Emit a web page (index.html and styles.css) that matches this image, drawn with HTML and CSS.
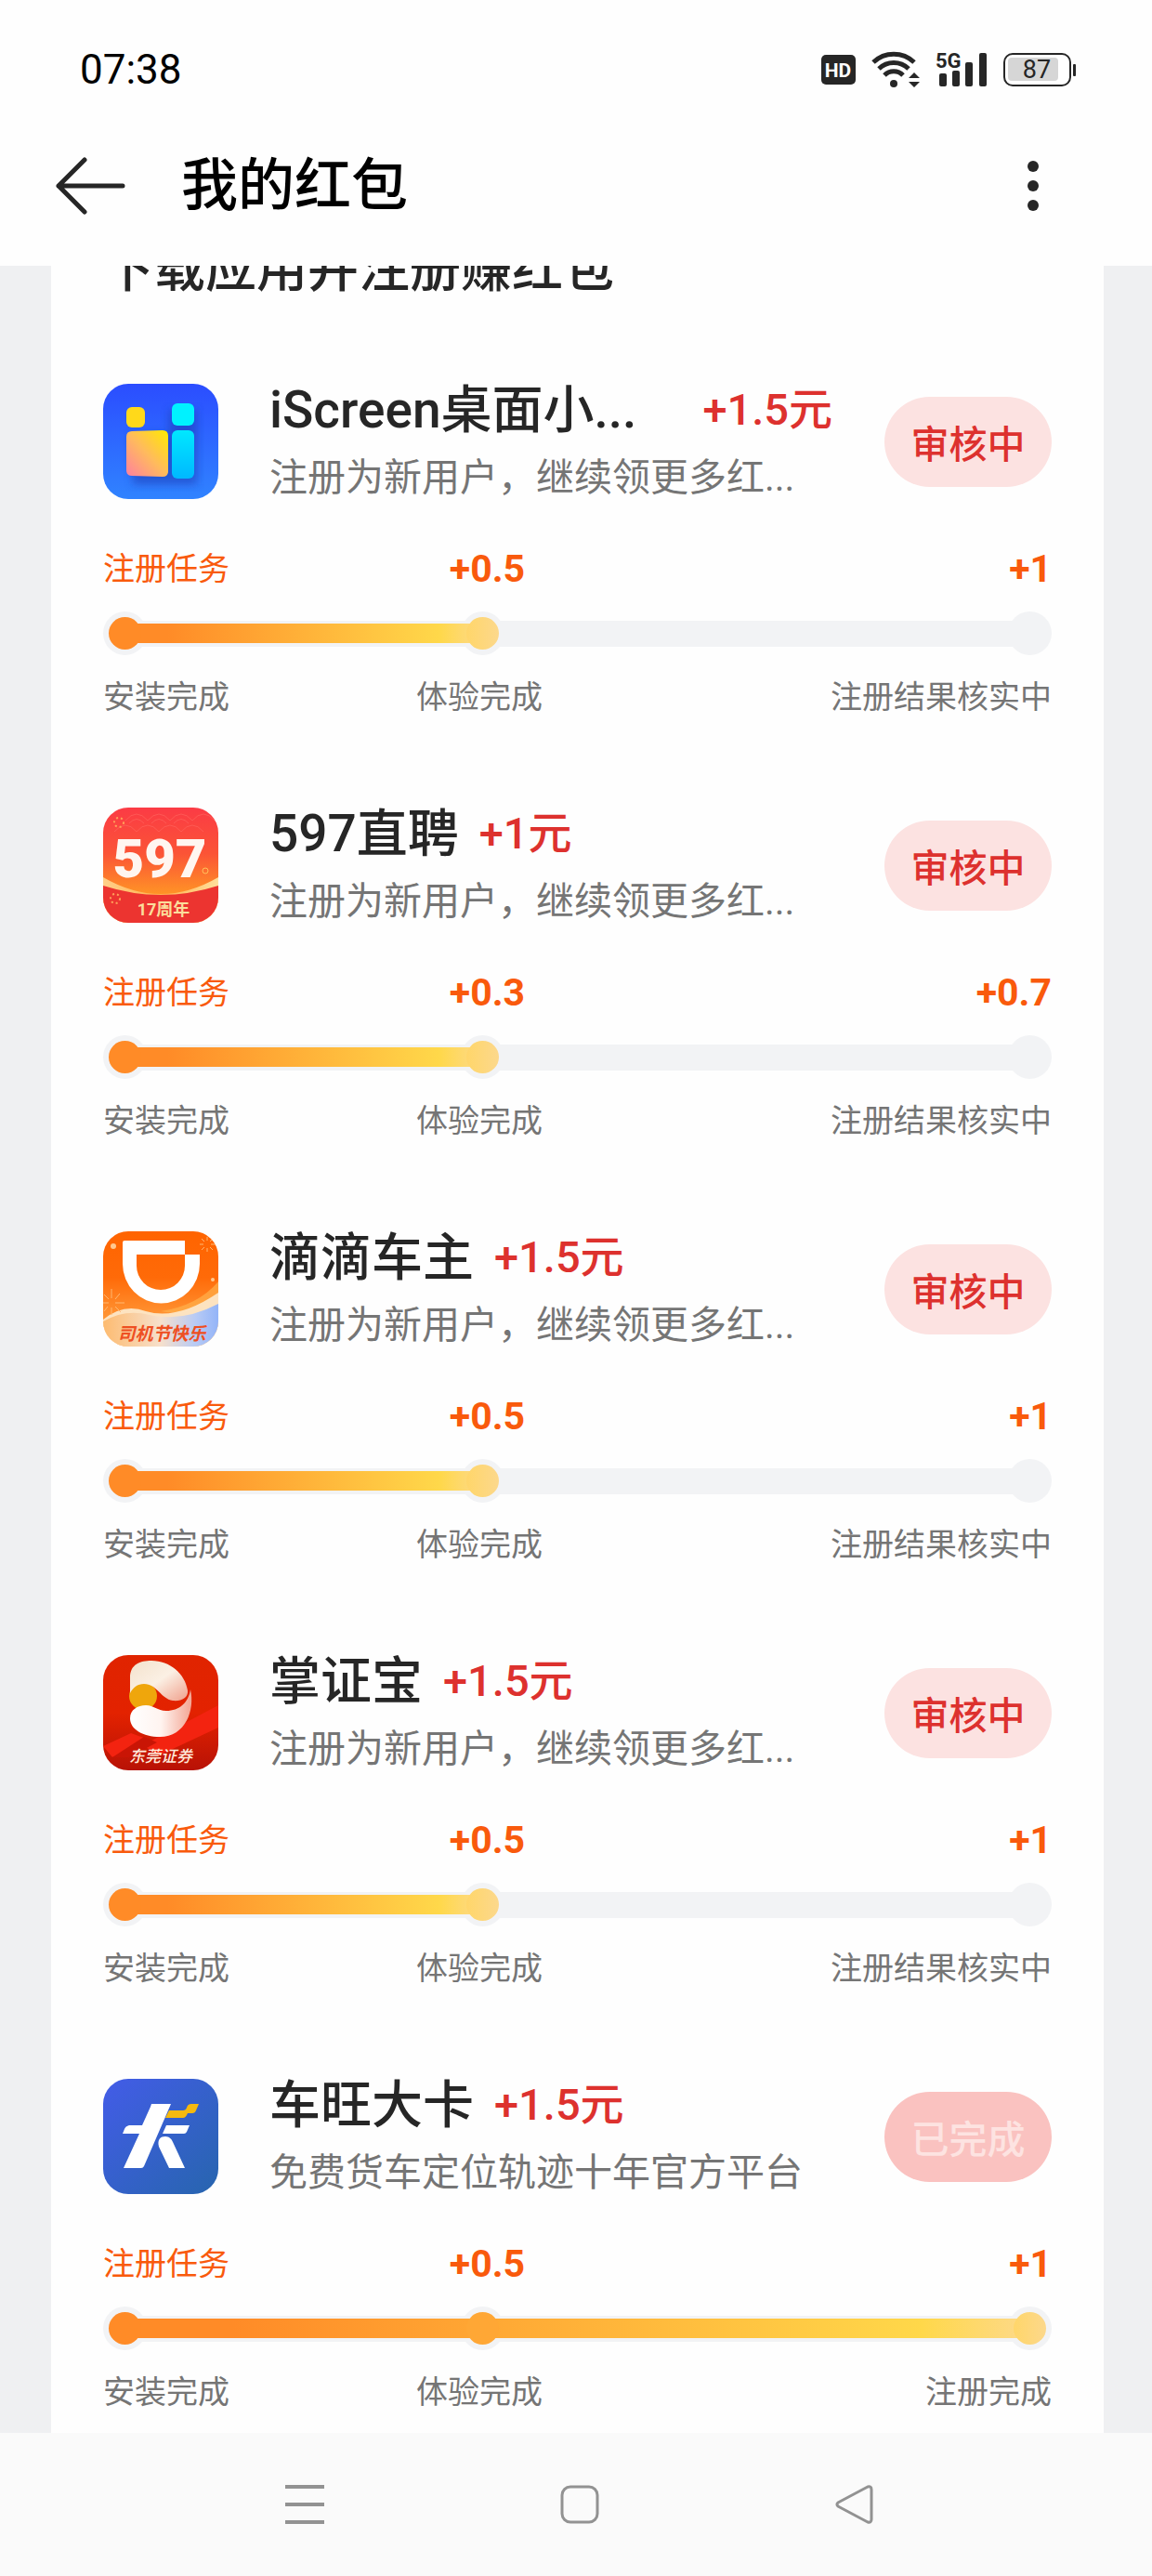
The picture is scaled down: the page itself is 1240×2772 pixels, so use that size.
FILE: index.html
```
<!DOCTYPE html>
<html lang="zh-CN">
<head>
  <meta charset="UTF-8">
  <title>我的红包</title>
  <meta name="viewport" content="width=device-width, initial-scale=1.0">
  <link rel="stylesheet" href="styles.css">
</head>
<body>
  <header class="header">
    <div class="status-bar">
      <span class="time">07:38</span>
      <div class="status-icons">
        <svg width="37" height="32" viewBox="0 0 37 32">
          <rect width="37" height="32" rx="5" fill="#262626"/>
          <text x="18" y="24" text-anchor="middle" font-size="21" font-weight="700" fill="#fff">HD</text>
        </svg>
        <svg width="52" height="40" viewBox="0 0 52 40">
          <g fill="none" stroke="#262626" stroke-width="5">
            <path d="M2 12a32 32 0 0 1 44 0"/>
            <path d="M8 19a23 23 0 0 1 32 0"/>
            <path d="M14 26a14 14 0 0 1 20 0"/>
          </g>
          <circle cx="24" cy="35" r="4" fill="#262626"/>
          <path d="M40 29l6-6 6 6zM40 33h12l-6 6z" fill="#262626"/>
        </svg>
        <svg width="56" height="40" viewBox="0 0 56 40">
          <text x="0" y="18" font-size="22" font-weight="700" fill="#262626">5G</text>
          <g fill="#262626">
            <rect x="4" y="24" width="8" height="14" rx="2"/>
            <rect x="18" y="21" width="8" height="17" rx="2"/>
            <rect x="32" y="12" width="8" height="26" rx="2"/>
            <rect x="47" y="2" width="8" height="36" rx="2"/>
          </g>
        </svg>
        <svg width="78" height="36" viewBox="0 0 78 36">
          <rect x="1" y="1" width="71" height="34" rx="9" fill="#fff" stroke="#262626" stroke-width="2"/>
          <rect x="5" y="5" width="54" height="25" rx="4" fill="#d6d6d6"/>
          <rect x="75" y="12" width="3" height="13" rx="1" fill="#262626"/>
          <text x="36" y="27" text-anchor="middle" font-size="27" fill="#262626">87</text>
        </svg>
      </div>
    </div>
    <div class="app-bar">
      <button class="icon-btn" type="button" aria-label="返回">
        <svg width="76" height="62" viewBox="0 0 76 62" fill="none" stroke="#262626" stroke-width="5" stroke-linecap="round" stroke-linejoin="round">
          <path d="M32 3L4 31l28 28M4 31h69"/>
        </svg>
      </button>
      <h1>我的红包</h1>
      <button class="icon-btn more" type="button" aria-label="更多">
        <svg width="14" height="56" viewBox="0 0 14 56" fill="#262626">
          <circle cx="7" cy="7" r="6"/>
          <circle cx="7" cy="28" r="6"/>
          <circle cx="7" cy="49" r="6"/>
        </svg>
      </button>
    </div>
  </header>

  <main class="content">
    <section class="card">
      <h2>下载应用并注册赚红包</h2>

      <!-- iScreen -->
      <article class="task">
        <div class="task-head">
          <svg class="app-icon" viewBox="0 0 124 124">
            <defs>
              <linearGradient id="screenBg" x1="0" y1="0" x2="0" y2="1">
                <stop offset="0" stop-color="#2b4dff"/>
                <stop offset="1" stop-color="#3083ff"/>
              </linearGradient>
              <linearGradient id="screenBox" x1="0" y1="1" x2="1" y2="0">
                <stop offset="0" stop-color="#ff7fa0"/>
                <stop offset="0.5" stop-color="#ffbb5c"/>
                <stop offset="1" stop-color="#ffea00"/>
              </linearGradient>
              <linearGradient id="screenBar" x1="0" y1="0" x2="0" y2="1">
                <stop offset="0" stop-color="#00e8ff"/>
                <stop offset="1" stop-color="#00b8ff"/>
              </linearGradient>
              <filter id="soft"><feGaussianBlur stdDeviation="5"/></filter>
            </defs>
            <rect width="124" height="124" rx="27" fill="url(#screenBg)"/>
            <path d="M29 54h42V28h30v80H32z" fill="#1b3fb8" opacity="0.6" filter="url(#soft)"/>
            <rect x="25" y="25" width="20" height="22" rx="6" fill="#ffd91a"/>
            <path d="M31 51l33-1q6 0 6 6v38q0 6-6 6l-33-1q-6 0-6-6V57q0-6 6-6z" fill="url(#screenBox)"/>
            <rect x="74" y="21" width="24" height="24" rx="6" fill="#00f2ff"/>
            <rect x="74" y="50" width="24" height="52" rx="6" fill="url(#screenBar)"/>
          </svg>
          <div class="info">
            <div class="name-line long">
              <h3>iScreen桌面小...</h3>
              <span class="price">+1.5元</span>
            </div>
            <p>注册为新用户，继续领更多红...</p>
          </div>
          <button class="pill" type="button">审核中</button>
        </div>
        <div class="rewards">
          <span class="kind">注册任务</span><b>+0.5</b><b>+1</b>
        </div>
        <div class="progress">
          <span class="node start"></span>
          <span class="node mid current"></span>
          <span class="node end empty"></span>
          <span class="fill half"></span>
        </div>
        <div class="steps">
          <span>安装完成</span><span>体验完成</span><span>注册结果核实中</span>
        </div>
      </article>

      <!-- 597 -->
      <article class="task">
        <div class="task-head">
          <svg class="app-icon" viewBox="0 0 124 124">
            <defs>
              <linearGradient id="jobBg" x1="0" y1="0" x2="0" y2="1">
                <stop offset="0" stop-color="#fb3b45"/>
                <stop offset="0.4" stop-color="#fb5436"/>
                <stop offset="0.75" stop-color="#ff9326"/>
              </linearGradient>
              <linearGradient id="jobArc" x1="0" y1="0" x2="1" y2="0">
                <stop offset="0" stop-color="#ffd08a"/>
                <stop offset="0.5" stop-color="#ffb04a"/>
                <stop offset="1" stop-color="#ffdf9c"/>
              </linearGradient>
              <clipPath id="jobClip"><rect width="124" height="124" rx="27"/></clipPath>
            </defs>
            <g clip-path="url(#jobClip)">
              <rect width="124" height="124" fill="url(#jobBg)"/>
              <g fill="none" stroke="#ff6a62" opacity="0.6">
                <path d="M24 14q12-14 24 0 12-14 24 0 12-14 24 0 12-14 24 0M12 26q12-14 24 0 12-14 24 0 12-14 24 0 12-14 24 0"/>
                <path d="M28 17q8-9 16 0M52 17q8-9 16 0M76 17q8-9 16 0"/>
              </g>
              <circle cx="17" cy="16" r="5" fill="none" stroke="#ffa05a" stroke-width="2" stroke-dasharray="2 3"/>
              <circle cx="110" cy="68" r="3" fill="none" stroke="#ffc05a"/>
              <path d="M0 75q62 36 124 0v49H0z" fill="url(#jobArc)"/>
              <path d="M0 84q62 20 124 0v40H0z" fill="#ec3430"/>
              <circle cx="13" cy="98" r="5" fill="none" stroke="#ffa05a" stroke-width="2" stroke-dasharray="2 3"/>
            </g>
            <text x="61" y="75" text-anchor="middle" font-size="58" font-weight="900" fill="#fff6f0">597</text>
            <text x="65" y="116" text-anchor="middle" font-size="18" font-weight="700" fill="#fbdd9c">17周年</text>
          </svg>
          <div class="info">
            <div class="name-line">
              <h3>597直聘</h3>
              <span class="price">+1元</span>
            </div>
            <p>注册为新用户，继续领更多红...</p>
          </div>
          <button class="pill" type="button">审核中</button>
        </div>
        <div class="rewards">
          <span class="kind">注册任务</span><b>+0.3</b><b>+0.7</b>
        </div>
        <div class="progress">
          <span class="node start"></span>
          <span class="node mid current"></span>
          <span class="node end empty"></span>
          <span class="fill half"></span>
        </div>
        <div class="steps">
          <span>安装完成</span><span>体验完成</span><span>注册结果核实中</span>
        </div>
      </article>

      <!-- 滴滴 -->
      <article class="task">
        <div class="task-head">
          <svg class="app-icon" viewBox="0 0 124 124">
            <defs>
              <linearGradient id="carBg" x1="0" y1="0" x2="0" y2="1">
                <stop offset="0" stop-color="#ff6400"/>
                <stop offset="0.4" stop-color="#ff6a08"/>
                <stop offset="0.8" stop-color="#ff9c3c"/>
              </linearGradient>
              <linearGradient id="carWave" x1="0" y1="0" x2="1" y2="0">
                <stop offset="0" stop-color="#fdbb70"/>
                <stop offset="0.5" stop-color="#f6e0cc"/>
                <stop offset="0.8" stop-color="#b8cbf5"/>
                <stop offset="1" stop-color="#93b4f8"/>
              </linearGradient>
              <clipPath id="carClip"><rect width="124" height="124" rx="27"/></clipPath>
            </defs>
            <g clip-path="url(#carClip)">
              <rect width="124" height="124" fill="url(#carBg)"/>
              <path d="M62 86q40-6 62-32v20q-30 18-62 12z" fill="#ffb04c" opacity="0.7"/>
              <path d="M0 95q22-18 46-9 34 10 78-20v58H0z" fill="#fde3c0"/>
              <path d="M0 97q24-14 50-7 36 8 74-12v46H0z" fill="url(#carWave)"/>
              <g stroke="#ffb870" stroke-width="1">
                <path d="M9 62v10M9 82v8M-2 77h8M13 77h10M1 68l5 5M13 81l6 6M18 67l-5 6M5 81l-4 5"/>
                <path d="M112 6v4M112 18v4M104 14h4M116 14h5M106 8l3 3M115 17l3 3M118 8l-3 3M109 17l-3 3"/>
              </g>
              <circle cx="11" cy="16" r="3" fill="#ffc890"/>
              <circle cx="118" cy="52" r="2" fill="#ffc890"/>
            </g>
            <path fill-rule="evenodd" fill="#fff" d="M23 10h65v15h16v10a41 42 0 0 1-83 0V12q0-2 2-2zM36 25v12a26 26 0 0 0 52 0V25z"/>
            <text x="63" y="117" text-anchor="middle" font-size="19" font-weight="700" font-style="italic" fill="#ee4f22">司机节快乐</text>
          </svg>
          <div class="info">
            <div class="name-line">
              <h3>滴滴车主</h3>
              <span class="price">+1.5元</span>
            </div>
            <p>注册为新用户，继续领更多红...</p>
          </div>
          <button class="pill" type="button">审核中</button>
        </div>
        <div class="rewards">
          <span class="kind">注册任务</span><b>+0.5</b><b>+1</b>
        </div>
        <div class="progress">
          <span class="node start"></span>
          <span class="node mid current"></span>
          <span class="node end empty"></span>
          <span class="fill half"></span>
        </div>
        <div class="steps">
          <span>安装完成</span><span>体验完成</span><span>注册结果核实中</span>
        </div>
      </article>

      <!-- 掌证宝 -->
      <article class="task">
        <div class="task-head">
          <svg class="app-icon" viewBox="0 0 124 124">
            <defs>
              <linearGradient id="bankBg" x1="0" y1="0" x2="0" y2="1">
                <stop offset="0" stop-color="#e02400"/>
                <stop offset="0.5" stop-color="#e32200"/>
                <stop offset="1" stop-color="#b81206"/>
              </linearGradient>
              <linearGradient id="bankTop" x1="0" y1="0" x2="1" y2="1">
                <stop offset="0" stop-color="#f3e2cc"/>
                <stop offset="0.5" stop-color="#fbf0e4"/>
                <stop offset="1" stop-color="#f0a08c"/>
              </linearGradient>
              <linearGradient id="bankLow" x1="0" y1="0" x2="1" y2="0">
                <stop offset="0" stop-color="#fff"/>
                <stop offset="0.5" stop-color="#fff4f0"/>
                <stop offset="1" stop-color="#f3a593"/>
              </linearGradient>
              <clipPath id="bankClip"><rect width="124" height="124" rx="27"/></clipPath>
            </defs>
            <g clip-path="url(#bankClip)">
              <rect width="124" height="124" fill="url(#bankBg)"/>
              <path d="M0 98l30-14 22 8 72-38v24L60 108 44 98 10 110z" fill="#f32310"/>
              <path d="M10 110l34-22 14 6-30 16z" fill="#c91505"/>
            </g>
            <circle cx="43" cy="44" r="15" fill="#efa60c"/>
            <path d="M29 41V24C29 10 40 6 52 6c20 0 36 14 39 32 1 8-7 12-16 11-13-2-17-18-31-18-7 0-12 4-15 10z" fill="url(#bankTop)"/>
            <path d="M94 37c5 22-5 51-33 51-18 0-32-8-32-20 0-9 8-14 17-14 9 0 12 6 22 6 14 0 24-9 26-23z" fill="url(#bankLow)"/>
            <text x="62" y="115" text-anchor="middle" font-size="17" font-weight="500" font-style="italic" fill="#ffe9dc">东莞证券</text>
          </svg>
          <div class="info">
            <div class="name-line">
              <h3>掌证宝</h3>
              <span class="price">+1.5元</span>
            </div>
            <p>注册为新用户，继续领更多红...</p>
          </div>
          <button class="pill" type="button">审核中</button>
        </div>
        <div class="rewards">
          <span class="kind">注册任务</span><b>+0.5</b><b>+1</b>
        </div>
        <div class="progress">
          <span class="node start"></span>
          <span class="node mid current"></span>
          <span class="node end empty"></span>
          <span class="fill half"></span>
        </div>
        <div class="steps">
          <span>安装完成</span><span>体验完成</span><span>注册结果核实中</span>
        </div>
      </article>

      <!-- 车旺大卡 -->
      <article class="task">
        <div class="task-head">
          <svg class="app-icon" viewBox="0 0 124 124">
            <defs>
              <linearGradient id="truckBg" x1="0" y1="0" x2="1" y2="1">
                <stop offset="0" stop-color="#435ce8"/>
                <stop offset="1" stop-color="#2765ae"/>
              </linearGradient>
            </defs>
            <rect width="124" height="124" rx="27" fill="url(#truckBg)"/>
            <g fill="#fff">
              <path d="M52 27h21L44 94q-1 2-3 2H22l17-37H21l2-5q1-3 5-4h14l9-20z"/>
              <path d="M68 50h25l-3 7q-1 2-3 2H64z"/>
              <path d="M60 73c-2-8 2-11 7-11 4 0 7 3 8 6l13 28H71z"/>
            </g>
            <path d="M71 34h15q3 0 4-3 1-4 5-4h8l-3 7q-1 3-4 3h-5q-2 5-5 5H67z" fill="#f5b90f"/>
          </svg>
          <div class="info">
            <div class="name-line">
              <h3>车旺大卡</h3>
              <span class="price">+1.5元</span>
            </div>
            <p>免费货车定位轨迹十年官方平台</p>
          </div>
          <button class="pill" type="button" disabled>已完成</button>
        </div>
        <div class="rewards">
          <span class="kind">注册任务</span><b>+0.5</b><b>+1</b>
        </div>
        <div class="progress">
          <span class="node start"></span>
          <span class="node mid"></span>
          <span class="node end current"></span>
          <span class="fill"></span>
        </div>
        <div class="steps">
          <span>安装完成</span><span>体验完成</span><span>注册完成</span>
        </div>
      </article>
    </section>
  </main>

  <nav class="nav-bar">
    <button class="icon-btn" type="button" aria-label="最近任务">
      <svg width="42" height="42" viewBox="0 0 42 42" fill="none" stroke="#929292" stroke-width="4">
        <path d="M0 2h42M0 21h42M0 40h42"/>
      </svg>
    </button>
    <button class="icon-btn" type="button" aria-label="主页">
      <svg width="42" height="42" viewBox="0 0 42 42" fill="none" stroke="#929292" stroke-width="3">
        <rect x="2" y="2" width="38" height="38" rx="9"/>
      </svg>
    </button>
    <button class="icon-btn" type="button" aria-label="返回上一级">
      <svg width="42" height="42" viewBox="0 0 42 42" fill="none" stroke="#929292" stroke-width="3" stroke-linejoin="round">
        <path d="M3 19L35 2q4-1 4 3v32q0 4-4 3L3 23q-2-2 0-4z"/>
      </svg>
    </button>
  </nav>
</body>
</html>
```
FILE: styles.css
```
:root {
  --text: #262626;
  --muted: #757575;
  --red: #dd312e;
  --orange: #f95a0c;
  --track: #f2f3f5;
}

* {
  box-sizing: border-box;
  margin: 0;
}

body {
  display: flex;
  flex-direction: column;
  min-height: 100vh;
  background: #eff0f2;
  color: var(--text);
  font-family: Roboto, "Noto Sans CJK SC", sans-serif;
}

svg {
  display: block;
}

button {
  border: none;
  font-family: inherit;
}

.header {
  background: #fefefe;
  padding-bottom: 36px;
}

.status-bar {
  display: flex;
  align-items: center;
  justify-content: space-between;
  height: 150px;
  padding: 0 82px 0 86px;
}

.time {
  font-size: 44px;
  color: #000;
}

.status-icons {
  display: flex;
  align-items: center;
  gap: 17px;
}

.app-bar {
  display: flex;
  align-items: center;
  height: 100px;
  padding: 0 121px 0 59px;
}

.app-bar h1 {
  margin-left: 60px;
  font-size: 61px;
  line-height: 80px;
  font-weight: 500;
  color: #000;
}

.icon-btn {
  padding: 0;
  background: none;
}

.more {
  margin-left: auto;
}

.content {
  display: flex;
  flex: 1;
  flex-direction: column;
  overflow: hidden;
}

/* the list is scrolled a little way under the header */
.card {
  flex: 1;
  margin: -36px 52px 0 55px;
  padding: 0 56px;
  background: #fefefe;
}

.card h2 {
  margin-bottom: 85px;
  font-size: 55px;
  line-height: 78px;
  font-weight: 500;
}

.task {
  margin-bottom: 96px;
}

.task:last-child {
  margin-bottom: 0;
}

.task-head {
  display: flex;
  align-items: center;
}

.app-icon {
  flex: none;
  width: 124px;
  height: 124px;
  margin-right: 55px;
}

.info {
  flex: 1;
  min-width: 0;
  margin-right: 56px;
}

.name-line {
  display: flex;
  align-items: center;
  gap: 22px;
  margin-bottom: 22px;
  line-height: 56px;
  white-space: nowrap;
}

.name-line.long {
  justify-content: space-between;
}

.name-line h3 {
  font-size: 55px;
  font-weight: 500;
}

.price {
  color: var(--red);
  font-size: 47px;
  font-weight: 500;
}

.info p {
  color: var(--muted);
  font-size: 41px;
  line-height: 46px;
  white-space: nowrap;
}

.pill {
  flex: none;
  width: 180px;
  height: 97px;
  padding: 0;
  border-radius: 49px;
  background: #fce2e1;
  color: var(--red);
  font-size: 41px;
  font-weight: 500;
}

.pill:disabled {
  background: #fac2c0;
  color: #fde3e1;
}

.rewards,
.steps {
  display: grid;
  font-size: 34px;
  line-height: 46px;
}

.rewards {
  grid-template-columns: 34% 13% 1fr;
  align-items: center;
  margin-top: 52px;
  color: var(--orange);
}

.rewards b {
  font-size: 41px;
  text-align: center;
}

.rewards b:last-child,
.steps span:last-child {
  text-align: right;
}

.steps {
  grid-template-columns: 33% 1fr 1fr;
  margin-top: 22px;
  color: var(--muted);
}

.progress {
  position: relative;
  height: 47px;
  margin-top: 23px;
  background: linear-gradient(var(--track), var(--track)) center / calc(100% - 46px) 28px no-repeat;
}

.node {
  position: absolute;
  top: 0;
  width: 47px;
  height: 47px;
  border-radius: 50%;
  background: var(--track);
}

.node::after {
  content: "";
  position: absolute;
  z-index: 2;
  top: 6px;
  left: 6px;
  width: 35px;
  height: 35px;
  border-radius: 50%;
  background: #ff8b27;
}

.mid {
  left: 40%;
  margin-left: -23px;
}

.mid::after {
  background: #ffa735;
}

.end {
  right: 0;
}

.current::after {
  background: linear-gradient(90deg, #ffd66a, #fcd88c);
}

.empty::after {
  display: none;
}

.fill {
  position: absolute;
  z-index: 1;
  top: 13px;
  left: 23px;
  right: 23px;
  height: 21px;
  background: linear-gradient(90deg, #ff8b27 12%, #ffd84a 88%, #fdd98c);
}

.fill.half {
  right: 60%;
}

.nav-bar {
  display: grid;
  grid-template-columns: repeat(3, 1fr);
  place-items: center;
  height: 154px;
  padding: 0 172px 0 180px;
  background: #fafafa;
}
```
